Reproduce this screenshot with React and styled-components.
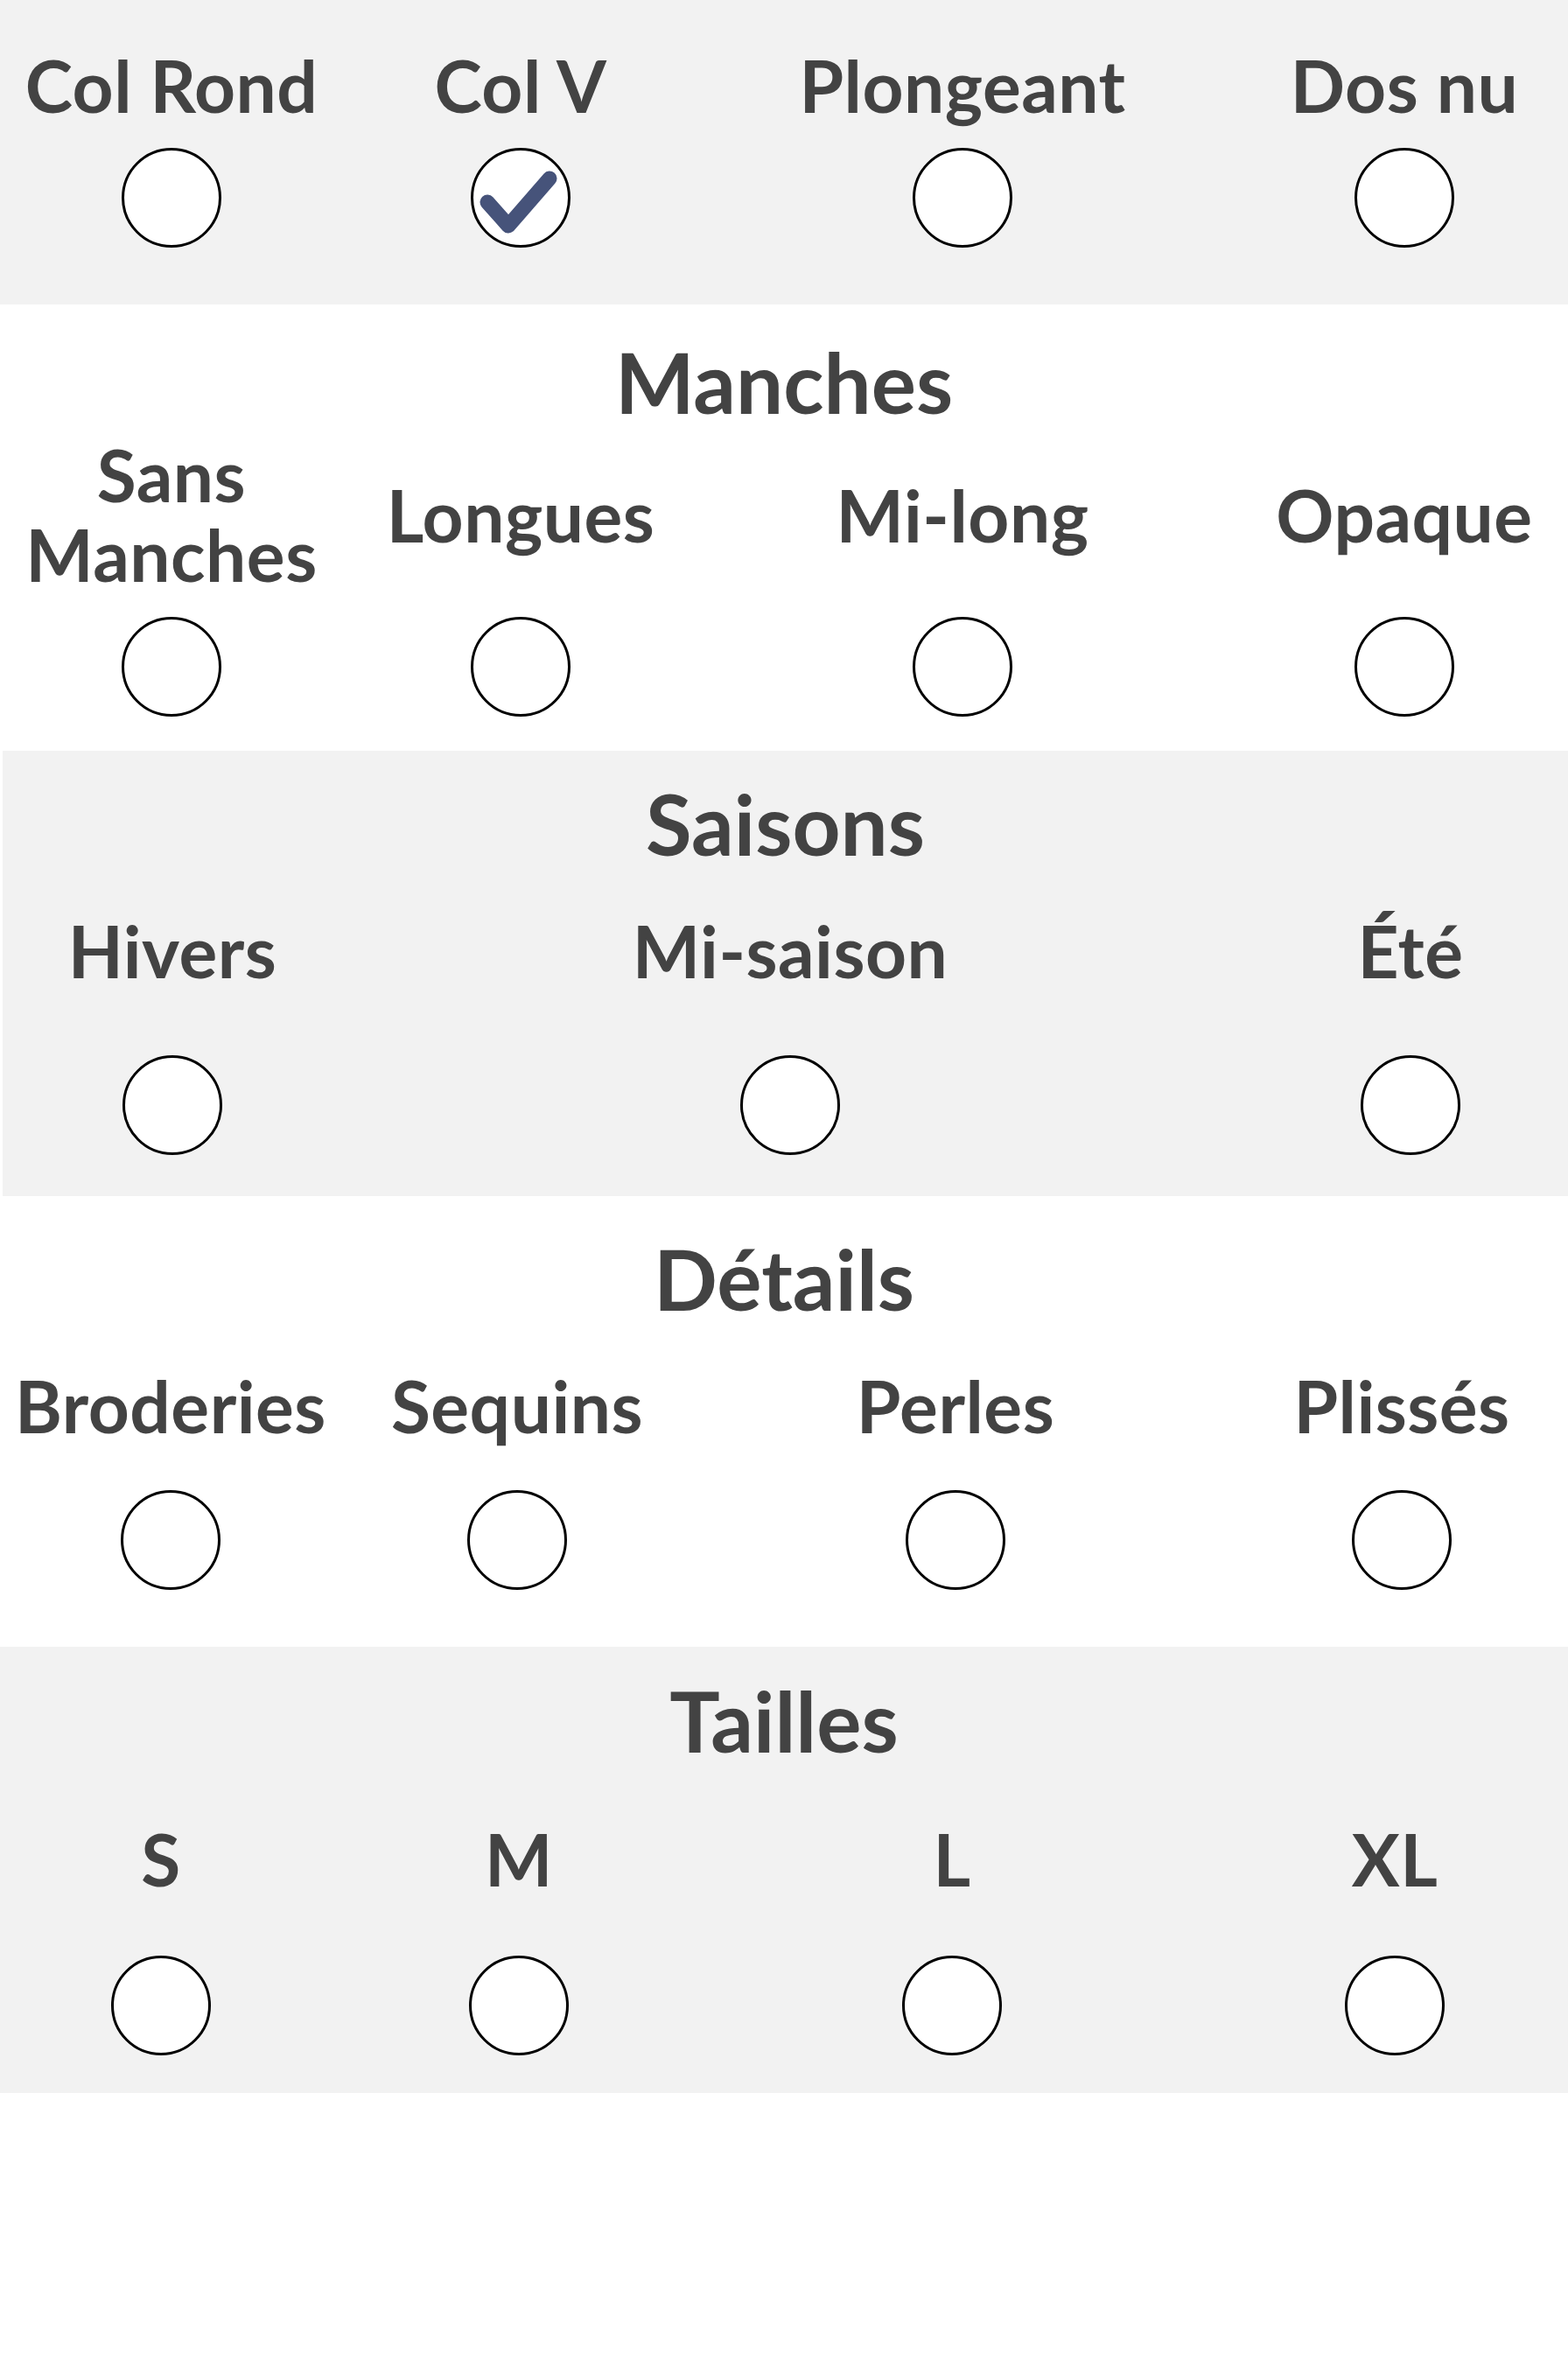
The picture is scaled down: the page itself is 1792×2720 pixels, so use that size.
import styled, { createGlobalStyle } from 'styled-components';

const GlobalStyle = createGlobalStyle`
    html, body {
        margin: 0;
        padding: 0;
        background: #ffffff;
        overflow-x: hidden;
    }
    body {
        width: 1792px;
        min-height: 2720px;
        font-family: "Lato", "Liberation Sans", sans-serif;
        color: #434343;
    }
`;

// column tracks per block, so that each option sits where it does in the design
const groups = [
    {
        key: 'col',
        tint: true,
        pt: 52, pb: 65, labelH: 91, headGap: 0, circleGap: 26,
        cols: '392px 406px 604px 406px',
        items: [
            { label: 'Col Rond' },
            { label: 'Col V', checked: true },
            { label: 'Plongeant' },
            { label: 'Dos nu' },
        ],
    },
    {
        key: 'manches',
        title: 'Manches',
        pt: 34, pb: 39, labelH: 182, headGap: 7, circleGap: 26,
        cols: '392px 406px 604px 406px',
        items: [
            { label: 'Sans Manches' },
            { label: 'Longues' },
            { label: 'Mi-long' },
            { label: 'Opaque' },
        ],
    },
    {
        key: 'saisons',
        title: 'Saisons',
        tint: true,
        inset: true,
        pt: 29, pb: 47, labelH: 182, headGap: 0, circleGap: 29,
        cols: '388px 1024px 394px',
        items: [
            { label: 'Hivers' },
            { label: 'Mi-saison' },
            { label: 'Été' },
        ],
    },
    {
        key: 'details',
        title: 'Détails',
        pt: 40, pb: 65, labelH: 182, headGap: 0, circleGap: 6,
        cols: '390px 402px 600px 420px',
        items: [
            { label: 'Broderies' },
            { label: 'Sequins' },
            { label: 'Perles' },
            { label: 'Plissés' },
        ],
    },
    {
        key: 'tailles',
        title: 'Tailles',
        tint: true,
        pt: 30, pb: 43, labelH: 182, headGap: 13, circleGap: 20,
        cols: '368px 450px 540px 472px',
        items: [
            { label: 'S' },
            { label: 'M' },
            { label: 'L' },
            { label: 'XL' },
        ],
    },
];

const CheckMark = () => (
    <svg width="114" height="114" viewBox="0 0 114 114">
        <path
            d="M19 62 L43 89 L90 35"
            fill="none"
            stroke="#46537a"
            strokeWidth="17"
            strokeLinecap="round"
            strokeLinejoin="round"
        />
    </svg>
);

const App = () => {
    return (
        <Page>
            <GlobalStyle />
            {groups.map((g) => (
                <Section
                    key={g.key}
                    $tint={g.tint}
                    $inset={g.inset}
                    $pt={g.pt}
                    $pb={g.pb}
                >
                    {g.title && <Heading $gap={g.headGap}>{g.title}</Heading>}
                    <Options $cols={g.cols}>
                        {g.items.map((it) => (
                            <Option key={it.label}>
                                <Label $h={g.labelH}>{it.label}</Label>
                                <Circle $gap={g.circleGap}>
                                    {it.checked && <CheckMark />}
                                </Circle>
                            </Option>
                        ))}
                    </Options>
                </Section>
            ))}
        </Page>
    );
};

const Page = styled.div`
    width: 1792px;
    min-height: 2720px;
    background: #ffffff;
    overflow: hidden;
`;

const Section = styled.section`
    background: ${(p) => (p.$tint ? '#f2f2f2' : '#ffffff')};
    margin-left: ${(p) => (p.$inset ? '3px' : '0')};
    padding: ${(p) => p.$pt}px 0 ${(p) => p.$pb}px;
    overflow: hidden;
`;

const Heading = styled.h2`
    margin: 0 0 ${(p) => p.$gap}px;
    font-size: 96px;
    line-height: 108px;
    font-weight: 700;
    text-align: center;
    color: #434343;
`;

const Options = styled.div`
    display: grid;
    grid-template-columns: ${(p) => p.$cols};
`;

const Option = styled.div`
    display: flex;
    flex-direction: column;
    align-items: center;
`;

const Label = styled.div`
    height: ${(p) => p.$h}px;
    display: flex;
    align-items: center;
    justify-content: center;
    text-align: center;
    font-size: 82px;
    line-height: 91px;
    font-weight: 700;
    letter-spacing: 0.5px;
    color: #434343;
`;

const Circle = styled.span`
    margin-top: ${(p) => p.$gap}px;
    width: 114px;
    height: 114px;
    box-sizing: border-box;
    border: 3px solid #000000;
    border-radius: 50%;
    background: #ffffff;
    display: flex;
    align-items: center;
    justify-content: center;
    overflow: hidden;

    svg {
        flex: none;
    }
`;

export default App;
